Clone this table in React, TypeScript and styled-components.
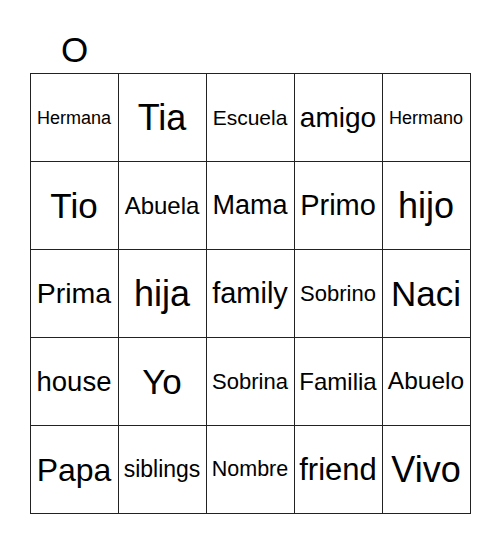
import React from 'react';
import styled, { createGlobalStyle } from 'styled-components';

const GlobalStyle = createGlobalStyle`
  html, body {
    margin: 0;
    padding: 0;
    background: #ffffff;
  }
  body {
    font-family: "Liberation Sans", Arial, sans-serif;
    color: #000000;
  }
`;

interface Word {
  text: string;
  size: number;
}

const board: Word[][] = [
  [
    { text: 'Hermana', size: 18 },
    { text: 'Tia', size: 36 },
    { text: 'Escuela', size: 21 },
    { text: 'amigo', size: 28 },
    { text: 'Hermano', size: 18 }
  ],
  [
    { text: 'Tio', size: 35 },
    { text: 'Abuela', size: 24 },
    { text: 'Mama', size: 27 },
    { text: 'Primo', size: 29 },
    { text: 'hijo', size: 36 }
  ],
  [
    { text: 'Prima', size: 28.5 },
    { text: 'hija', size: 36 },
    { text: 'family', size: 29 },
    { text: 'Sobrino', size: 22 },
    { text: 'Naci', size: 35 }
  ],
  [
    { text: 'house', size: 27.5 },
    { text: 'Yo', size: 35 },
    { text: 'Sobrina', size: 22 },
    { text: 'Familia', size: 24 },
    { text: 'Abuelo', size: 24.5 }
  ],
  [
    { text: 'Papa', size: 32 },
    { text: 'siblings', size: 23 },
    { text: 'Nombre', size: 21.5 },
    { text: 'friend', size: 31 },
    { text: 'Vivo', size: 36 }
  ]
];

const header = ['O', '', '', '', ''];

const Page = styled.div`
  width: 441px;
  margin: 0 auto;
  padding-left: 0;
`;

const HeaderRow = styled.div`
  display: grid;
  grid-template-columns: 1px repeat(5, 88px);
  height: 73px;
  box-sizing: border-box;
  padding-bottom: 6px;
  align-items: end;
`;

const HeaderLetter = styled.div`
  text-align: center;
  font-size: 35px;
  line-height: 1;
`;

const Grid = styled.div`
  display: grid;
  grid-template-columns: repeat(5, 88px);
  border-left: 1px solid #222;
  border-top: 1px solid #222;
  width: 440px;
`;

const Cell = styled.div<{ $size: number }>`
  height: 87px;
  border-right: 1px solid #222;
  border-bottom: 1px solid #222;
  display: flex;
  align-items: center;
  justify-content: center;
  font-size: ${(p) => p.$size}px;
  line-height: 1;
  white-space: nowrap;
  overflow: hidden;
`;

export default function App (): React.ReactElement {
  return (
    <>
      <GlobalStyle />
      <Page>
        <HeaderRow>
          <span />
          {header.map((letter, i) => (
            <HeaderLetter key={i}>{letter}</HeaderLetter>
          ))}
        </HeaderRow>
        <Grid>
          {board.flat().map((word, i) => (
            <Cell $size={word.size} key={i}>{word.text}</Cell>
          ))}
        </Grid>
      </Page>
    </>
  );
}
